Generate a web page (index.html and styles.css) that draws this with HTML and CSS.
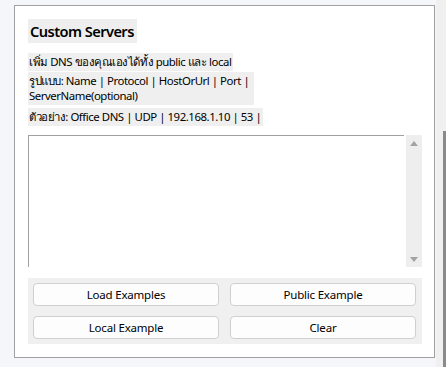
FILE: index.html
```html
<!DOCTYPE html>
<html lang="th">
<head>
<meta charset="utf-8">
<title>Custom Servers</title>
<link rel="stylesheet" href="styles.css">
</head>
<body>
<div class="window">
  <section class="panel">
    <h2 class="title">Custom Servers</h2>
    <div class="desc">
      <p class="line">เพิ่ม DNS ของคุณเองได้ทั้ง public และ local</p>
      <p class="line">รูปแบบ: Name | Protocol | HostOrUrl | Port |<br>ServerName(optional)</p>
      <p class="line">ตัวอย่าง: Office DNS | UDP | 192.168.1.10 | 53 |</p>
    </div>
    <div class="editor">
      <textarea class="input" spellcheck="false"></textarea>
      <div class="vscroll">
        <span class="arrow up"></span>
        <span class="arrow down"></span>
      </div>
    </div>
    <div class="actions">
      <button class="btn">Load Examples</button>
      <button class="btn">Public Example</button>
      <button class="btn">Local Example</button>
      <button class="btn">Clear</button>
    </div>
  </section>
  <div class="pagebar"><div class="thumb"></div></div>
</div>
</body>
</html>
```

FILE: styles.css
```css
html, body {
  margin: 0;
  padding: 0;
  height: 100%;
  overflow: hidden;
}
body {
  background: #f4f6fa;
  font-family: "Noto Sans", "Open Sans", "DejaVu Sans", "Noto Sans CJK SC", sans-serif;
  color: #000;
}
.window {
  display: flex;
  height: 367px;
}
.panel {
  box-sizing: border-box;
  width: 422px;
  height: 353px;
  margin: 5px 1px 0 14px;
  background: #fff;
  border: 1px solid #a0a0a0;
  padding: 13px 12px 0 13px;
  display: flex;
  flex-direction: column;
  align-items: flex-start;
}
.title {
  margin: 0;
  background: #eeeeee;
  font-size: 14.6px;
  font-weight: 600;
  line-height: 24px;
  height: 24px;
  padding: 0 3px 0 2px;
  letter-spacing: -0.55px;
}
.desc {
  margin-top: 10px;
  display: flex;
  flex-direction: column;
  align-items: flex-start;
}
.line {
  margin: 0;
  background: #efefef;
  font-size: 11.4px;
  line-height: 15px;
  padding: 1px 2px 2px 1px;
  letter-spacing: -0.45px;
}
.line:nth-child(2) { padding-right: 5px; }
.line + .line { margin-top: 1px; }
.line:last-child { margin-top: 3px; }
.editor {
  margin-top: 9px;
  display: flex;
  gap: 2px;
  width: 394px;
  height: 132px;
}
.input {
  box-sizing: border-box;
  flex: 1;
  height: 100%;
  margin: 0;
  padding: 2px;
  resize: none;
  border-style: solid;
  border-width: 1px 0 0 1px;
  border-color: #a0a0a0;
  background: #fff;
  outline: none;
  font: inherit;
}
.vscroll {
  width: 16px;
  height: 100%;
  background: #eeeeee;
  display: flex;
  flex-direction: column;
  justify-content: space-between;
  align-items: center;
  padding: 6px 0 5px;
  box-sizing: border-box;
}
.arrow {
  width: 0;
  height: 0;
  border-left: 4px solid transparent;
  border-right: 4px solid transparent;
}
.arrow.up { border-bottom: 5px solid #a3a3a3; }
.arrow.down { border-top: 5px solid #a3a3a3; }
.actions {
  margin-top: 11px;
  width: 394px;
  box-sizing: border-box;
  background: #f0f0f0;
  padding: 5px 6px 5px 5px;
  display: grid;
  grid-template-columns: 1fr 1fr;
  column-gap: 11px;
  row-gap: 10px;
}
.btn {
  height: 23px;
  margin: 0;
  padding: 0;
  background: #fdfdfd;
  border: 1px solid #d0d0d0;
  border-radius: 4px;
  font-family: inherit;
  font-size: 11.5px;
  color: #000;
  letter-spacing: -0.2px;
}
.pagebar {
  width: 10px;
  height: 100%;
  background: #f0f0f0;
  position: relative;
  margin-left: 0;
}
.thumb {
  position: absolute;
  right: 0;
  top: 131px;
  bottom: 0;
  width: 3px;
  background: #8a8a8a;
}
```
